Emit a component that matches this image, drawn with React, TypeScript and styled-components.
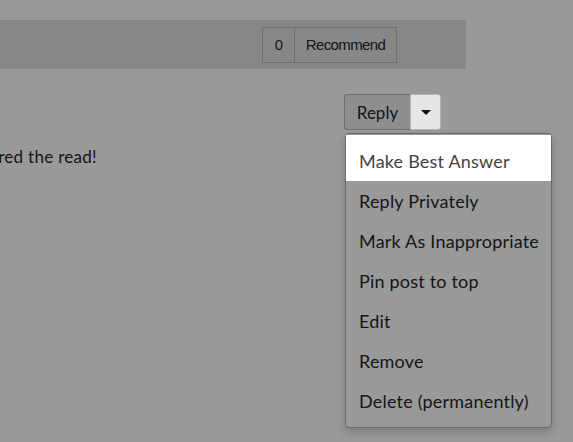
import React from 'react';
import styled, { createGlobalStyle } from 'styled-components';

const colors = {
  page: '#999999',
  bar: '#878787',
  border: '#6f6f6f',
  ink: '#151515',
  replyBg: '#8e8e8e',
  toggleBg: '#e6e6e6',
  white: '#ffffff',
};

const GlobalStyle = createGlobalStyle`
  html, body {
    margin: 0;
    padding: 0;
    background: ${colors.page};
    font-family: Lato, "Noto Sans", sans-serif;
    color: ${colors.ink};
  }
`;

const Page = styled.div`
  width: 573px;
  height: 442px;
  overflow: hidden;
  padding-top: 20px;
  box-sizing: border-box;
`;

const ActionBar = styled.div`
  width: 466px;
  height: 49px;
  background: ${colors.bar};
  display: flex;
  align-items: center;
  justify-content: flex-end;
  padding-right: 69px;
  box-sizing: border-box;
`;

const RecommendGroup = styled.div`
  display: flex;
  height: 36px;
  border: 1px solid ${colors.border};
  box-sizing: border-box;
  font-family: "Liberation Sans", Arial, sans-serif;
  font-size: 15px;
  letter-spacing: -0.6px;
`;

const RecommendCell = styled.div<{ wide?: boolean }>`
  width: ${(p) => (p.wide ? '102px' : '31px')};
  display: flex;
  align-items: center;
  justify-content: center;
  border-left: ${(p) => (p.wide ? `1px solid ${colors.border}` : 'none')};
  box-sizing: border-box;
`;

const PostRow = styled.div`
  width: 441px;
  display: flex;
  justify-content: space-between;
  align-items: flex-start;
  margin-top: 25px;
`;

const PostBody = styled.div`
  width: 97px;
  display: flex;
  justify-content: flex-end;
  overflow: hidden;
  white-space: nowrap;
  font-size: 17px;
  letter-spacing: 0.3px;
  margin-top: 52px;
`;

const ReplyWrap = styled.div`
  position: relative;
  display: flex;
  height: 36px;
`;

const ReplyButton = styled.div`
  width: 66px;
  height: 36px;
  box-sizing: border-box;
  border: 1px solid ${colors.border};
  border-right: none;
  border-radius: 3px 0 0 3px;
  background: ${colors.replyBg};
  display: flex;
  align-items: center;
  justify-content: center;
  font-size: 17px;
`;

const ToggleButton = styled.div`
  width: 31px;
  height: 36px;
  box-sizing: border-box;
  border: 1px solid #b4b4b4;
  border-radius: 0 3px 3px 0;
  background: ${colors.toggleBg};
  display: flex;
  align-items: center;
  justify-content: center;
`;

const Caret = styled.span`
  width: 0;
  height: 0;
  border-left: 5px solid transparent;
  border-right: 5px solid transparent;
  border-top: 5px solid #111;
`;

const Menu = styled.ul`
  position: absolute;
  top: 39px;
  left: 1px;
  width: 207px;
  margin: 0;
  padding: 1px 0 6px;
  list-style: none;
  box-sizing: border-box;
  border: 1px solid #6a6a6a;
  border-radius: 4px;
  background: ${colors.page};
  box-shadow: 0 4px 10px rgba(0, 0, 0, 0.2);
  font-size: 18px;
  letter-spacing: 0.2px;
`;

const MenuItem = styled.li<{ active?: boolean }>`
  height: ${(p) => (p.active ? '46px' : '40px')};
  padding: ${(p) => (p.active ? '5px' : '0')} 13px 0;
  box-sizing: border-box;
  display: flex;
  align-items: center;
  white-space: nowrap;
  background: ${(p) => (p.active ? colors.white : 'transparent')};
  color: ${(p) => (p.active ? '#463f3f' : colors.ink)};
`;

const items = [
  'Make Best Answer',
  'Reply Privately',
  'Mark As Inappropriate',
  'Pin post to top',
  'Edit',
  'Remove',
  'Delete (permanently)',
];

export default function App() {
  return (
    <>
      <GlobalStyle />
      <Page>
        <ActionBar>
          <RecommendGroup>
            <RecommendCell>0</RecommendCell>
            <RecommendCell wide>Recommend</RecommendCell>
          </RecommendGroup>
        </ActionBar>
        <PostRow>
          <PostBody>I really adored the read!</PostBody>
          <ReplyWrap>
            <ReplyButton>Reply</ReplyButton>
            <ToggleButton>
              <Caret />
            </ToggleButton>
            <Menu>
              {items.map((label, i) => (
                <MenuItem key={label} active={i === 0}>
                  {label}
                </MenuItem>
              ))}
            </Menu>
          </ReplyWrap>
        </PostRow>
      </Page>
    </>
  );
}
